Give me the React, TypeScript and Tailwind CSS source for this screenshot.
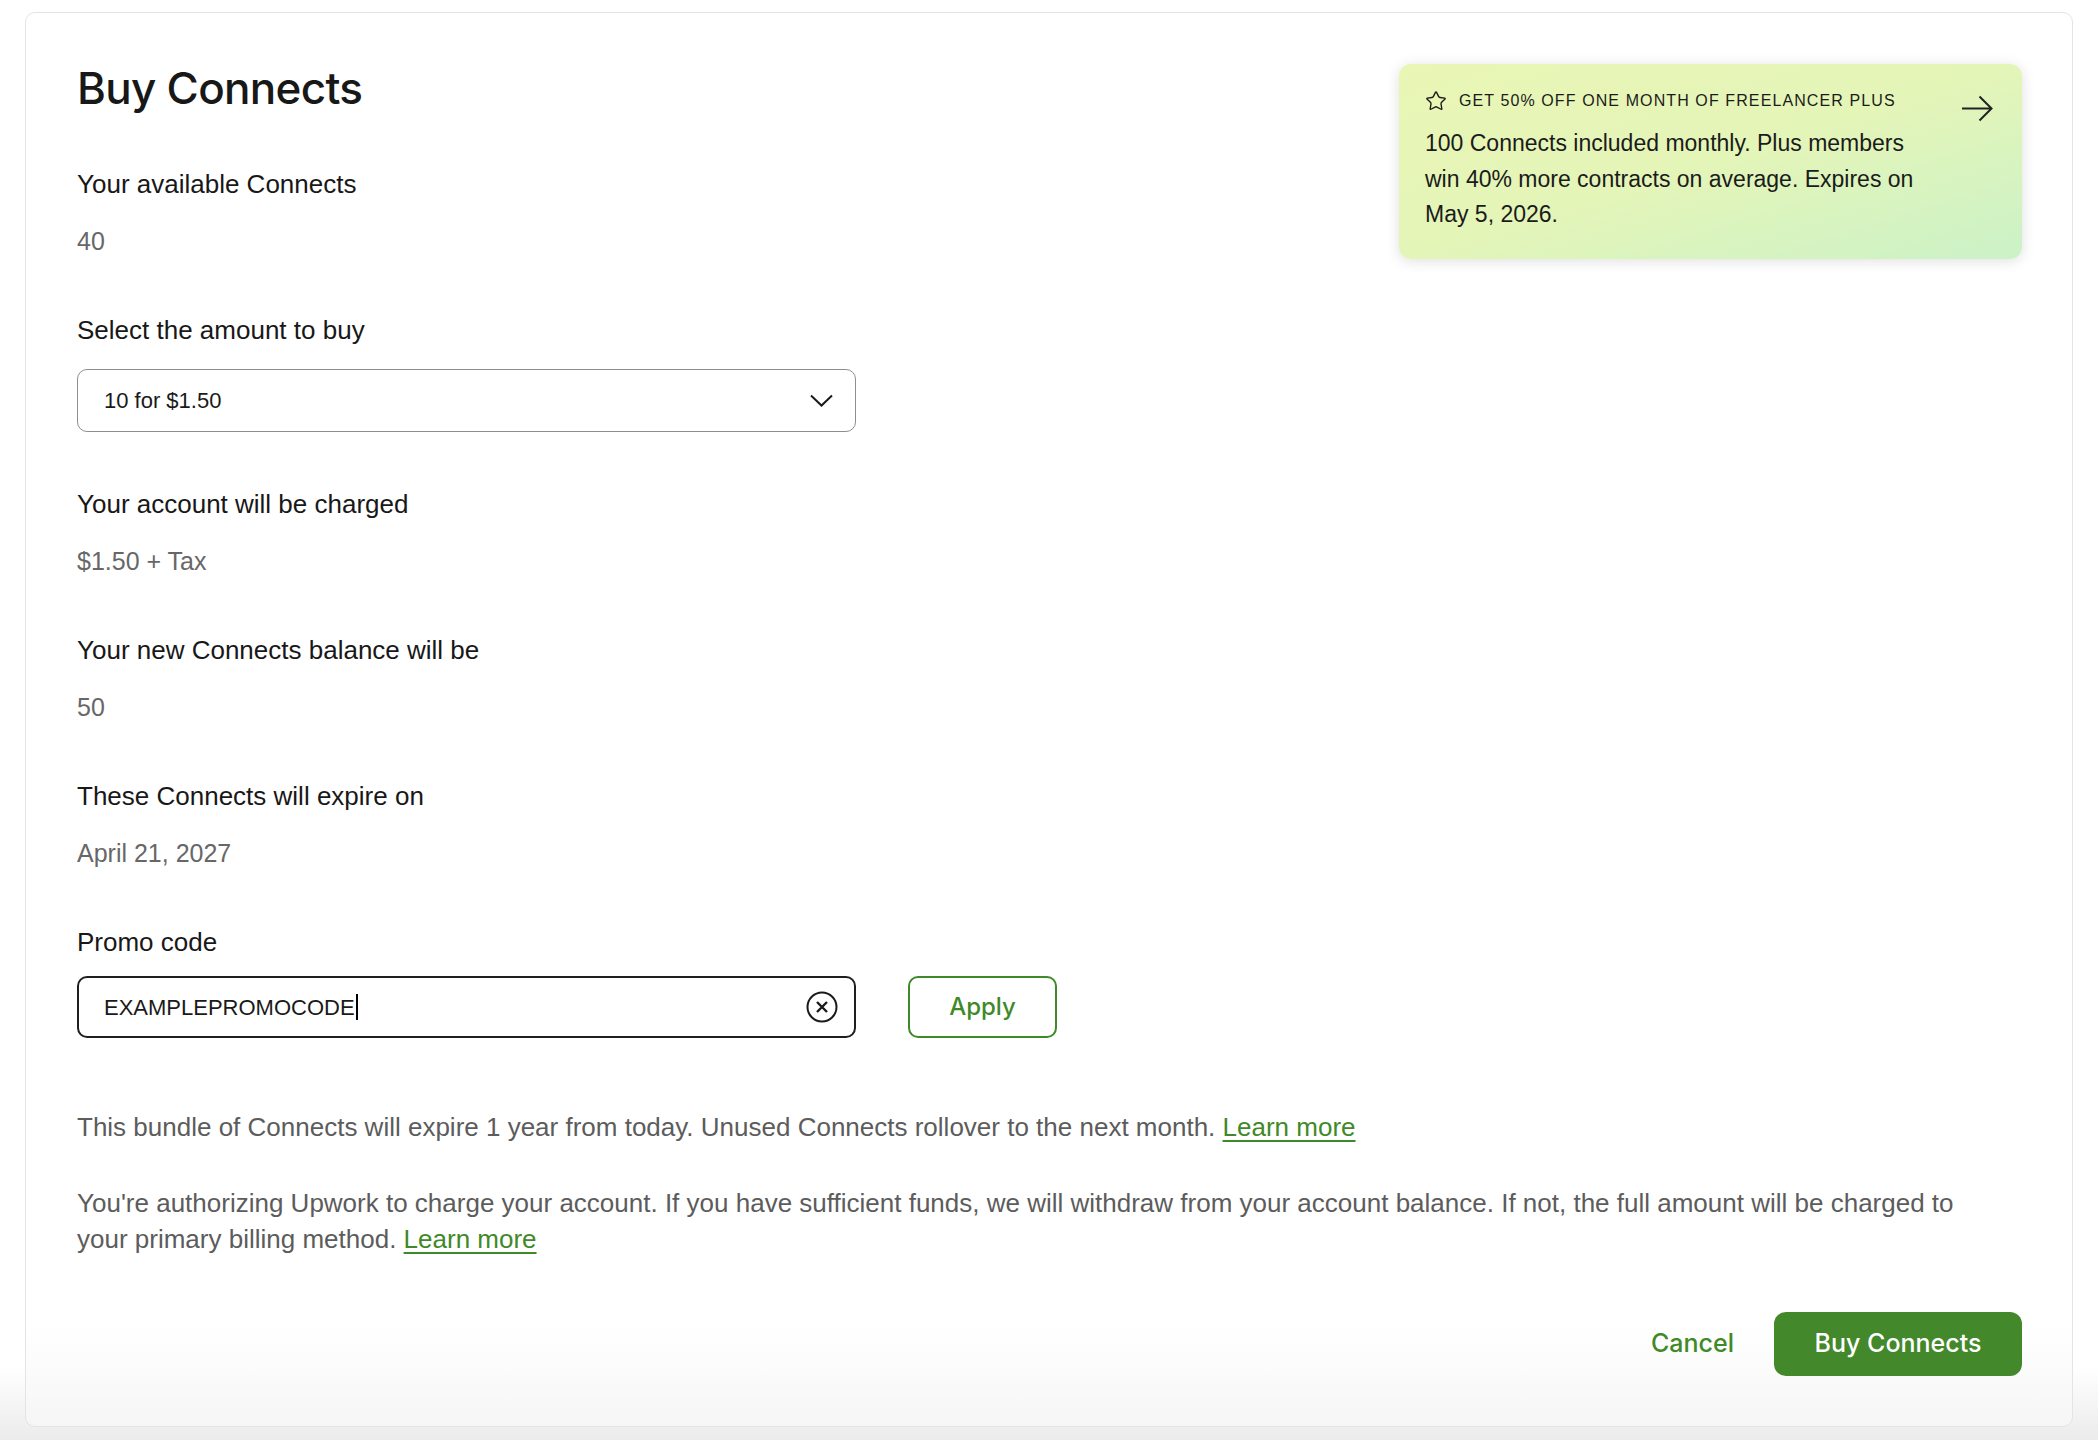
import { Star } from "lucide-react";

const body = "font-['Liberation_Sans',Arial,sans-serif]";
const ui = "font-['Inter',sans-serif]";

function Field({ label, value, first }: { label: string; value: string; first?: boolean }) {
  return (
    <div className={first ? "mt-[51px]" : "mt-[53px]"}>
      <div className="text-[26px] leading-[36px] text-[#181818]">{label}</div>
      <div className="mt-[21px] text-[25px] leading-[36px] text-[#676767]">{value}</div>
    </div>
  );
}

function PromoBanner() {
  return (
    <div className="mt-[3px] flex h-[195px] w-[623px] shrink-0 rounded-[12px] bg-linear-to-br from-[#e9f6b5] via-[#e4f5b8] to-[#cbf2c7] pl-[26px] pr-[29px] pt-[25px] shadow-[0_2px_14px_rgba(0,0,0,0.13)]">
      <div className="flex-1">
        <div className="flex h-[24px] items-center gap-[12px]">
          <Star size={22} strokeWidth={1.5} className="text-[#1b1b1b]" />
          <span className="text-[16px] leading-[24px] tracking-[1.1px] text-[#1b1b1b]">
            GET 50% OFF ONE MONTH OF FREELANCER PLUS
          </span>
        </div>
        <p className="mt-[13px] w-[498px] text-[23px] leading-[35.5px] text-[#1b1b1b]">
          100 Connects included monthly. Plus members win 40% more contracts on average. Expires on May 5, 2026.
        </p>
      </div>
      <svg width="32" height="27" viewBox="0 0 32 27" fill="none" className="mt-[6px] text-[#222]">
        <path d="M1 13.5H30.5M18.5 1.5L30.5 13.5L18.5 25.5" stroke="currentColor" strokeWidth="2" />
      </svg>
    </div>
  );
}

export default function App() {
  return (
    <div className={`${body} min-h-[1440px] bg-linear-to-b from-white from-[95%] to-[#ebebeb] px-[25px] pt-[12px]`}>
      <div className="rounded-[10px] border border-[#e4e4e4] bg-linear-to-b from-white from-[93%] to-[#f6f6f6] pb-[50px] pl-[51px] pr-[50px] pt-[48px]">
        <div className="flex">
          <div className="flex-1">
            <h1 className={`${ui} text-[44px] font-medium leading-[54px] tracking-[-0.7px] text-[#181818]`}>Buy Connects</h1>

            <Field first label="Your available Connects" value="40" />

            <div className="mt-[53px]">
              <div className="text-[26px] leading-[36px] text-[#181818]">Select the amount to buy</div>
              <div className="mt-[21px] flex h-[63px] w-[779px] items-center justify-between rounded-[10px] border border-[#8e8e8e] pl-[26px] pr-[22px]">
                <span className="text-[22px] text-[#1a1a1a]">10 for $1.50</span>
                <svg width="23" height="13" viewBox="0 0 23 13" fill="none" className="text-[#1a1a1a]">
                  <path d="M1 1.5L11.5 11.5L22 1.5" stroke="currentColor" strokeWidth="2" />
                </svg>
              </div>
            </div>

            <div className="mt-[54px]">
              <div className="text-[26px] leading-[36px] text-[#181818]">Your account will be charged</div>
              <div className="mt-[21px] text-[25px] leading-[36px] text-[#676767]">$1.50 + Tax</div>
            </div>
            <Field label="Your new Connects balance will be" value="50" />
            <Field label="These Connects will expire on" value="April 21, 2027" />

            <div className="mt-[53px]">
              <div className="text-[26px] leading-[36px] text-[#181818]">Promo code</div>
              <div className="mt-[16px] flex items-center">
                <div className="flex h-[62px] w-[779px] items-center justify-between rounded-[10px] border-2 border-[#1f1f1f] pl-[25px] pr-[16px]">
                  <div className="flex items-center">
                    <span className="text-[22px] text-[#1a1a1a]">EXAMPLEPROMOCODE</span>
                    <span className="ml-[1px] h-[26px] w-[2px] bg-black" />
                  </div>
                  <svg width="32" height="32" viewBox="0 0 32 32" fill="none" className="text-[#1a1a1a]">
                    <circle cx="16" cy="16" r="14.5" stroke="currentColor" strokeWidth="2" />
                    <path d="M11 11L21 21M21 11L11 21" stroke="currentColor" strokeWidth="2.4" />
                  </svg>
                </div>
                <button className={`${ui} ml-[52px] h-[62px] w-[149px] rounded-[10px] border-2 border-[#3f8a28] text-[24px] font-medium text-[#3f8a28]`}>
                  Apply
                </button>
              </div>
            </div>
          </div>
          <PromoBanner />
        </div>

        <p className="mt-[71px] text-[26px] leading-[36px] text-[#5c5c5c]">
          This bundle of Connects will expire 1 year from today. Unused Connects rollover to the next month.{" "}
          <a className="text-[#3f8a28] underline decoration-2 underline-offset-[4px]">Learn more</a>
        </p>
        <p className="mt-[40px] w-[1910px] text-[26px] leading-[36px] text-[#5c5c5c]">
          You're authorizing Upwork to charge your account. If you have sufficient funds, we will withdraw from your
          account balance. If not, the full amount will be charged to your primary billing method.{" "}
          <a className="text-[#3f8a28] underline decoration-2 underline-offset-[4px]">Learn more</a>
        </p>

        <div className={`${ui} mt-[55px] flex items-center justify-end`}>
          <button className="mr-[40px] text-[25px] font-medium text-[#3f8a28]">Cancel</button>
          <button className="h-[64px] w-[248px] rounded-[12px] bg-[#43882a] text-[25px] font-medium text-white">
            Buy Connects
          </button>
        </div>
      </div>
    </div>
  );
}
